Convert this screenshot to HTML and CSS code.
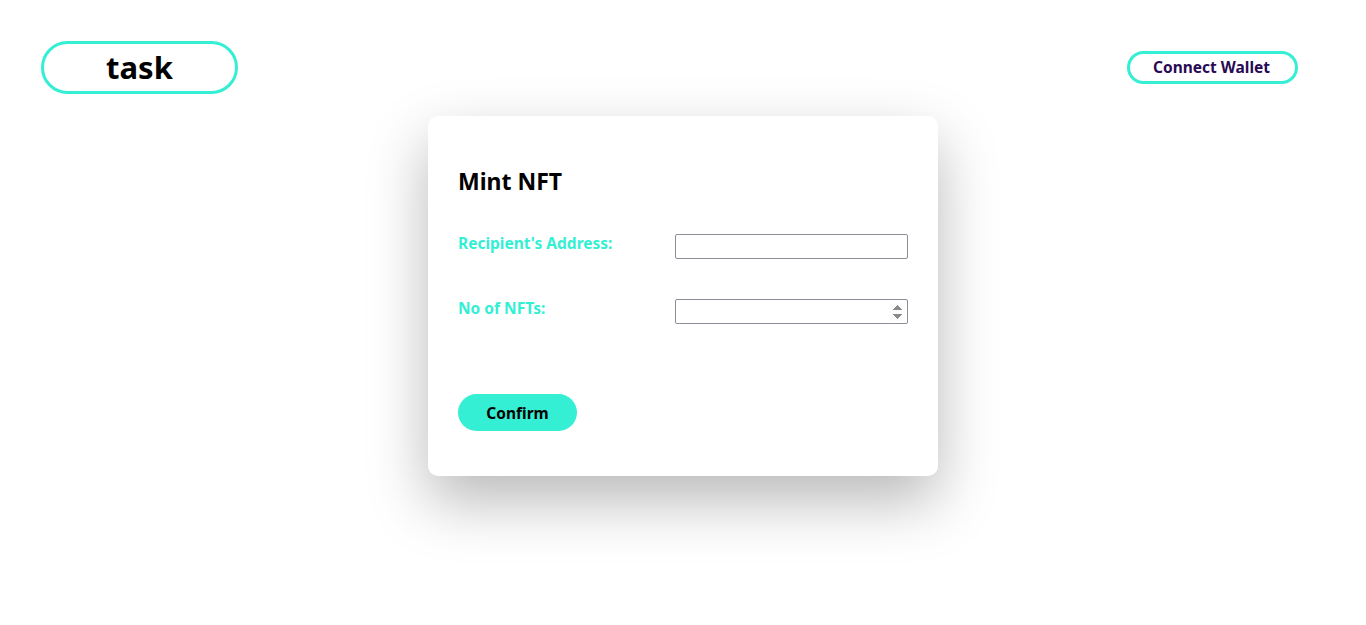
FILE: index.html
```html
<!DOCTYPE html>
<html>
<head>
<meta charset="utf-8">
<link rel="stylesheet" href="styles.css">
</head>
<body>
<header class="header">
  <div class="logo">task</div>
  <button class="wallet">Connect Wallet</button>
</header>
<main class="main">
  <section class="card">
    <h2 class="title">Mint NFT</h2>
    <div class="form">
      <label class="label" for="addr">Recipient's Address:</label>
      <input class="input" id="addr" type="text">
      <label class="label" for="num">No of NFTs:</label>
      <input class="input" id="num" type="number">
    </div>
    <button class="confirm">Confirm</button>
  </section>
</main>
</body>
</html>
```

FILE: styles.css
```css
html, body {
  margin: 0;
  padding: 0;
  background: #ffffff;
  font-family: "Noto Sans", "Open Sans", sans-serif;
}
body {
  min-height: 100vh;
}
.header {
  display: flex;
  justify-content: space-between;
  align-items: center;
  padding: 41px 68px 0 41px;
}
.logo {
  box-sizing: border-box;
  width: 197px;
  height: 53px;
  border: 3px solid #34efd4;
  border-radius: 27px;
  display: flex;
  align-items: center;
  justify-content: center;
  font-size: 31px;
  font-weight: 700;
  color: #000;
  padding-bottom: 2px;
}
.wallet {
  box-sizing: border-box;
  width: 171px;
  height: 33px;
  border: 3px solid #34efd4;
  border-radius: 17px;
  background: #fff;
  color: #290a55;
  font-family: inherit;
  font-size: 15.5px;
  font-weight: 700;
  padding: 0 2px 1px 0;
}
.main {
  display: flex;
  justify-content: center;
  padding-top: 22px;
  padding-bottom: 100px;
}
.card {
  box-sizing: border-box;
  width: 510px;
  height: 360px;
  background: #fff;
  border-radius: 10px;
  box-shadow: 0 25px 60px rgba(0, 0, 0, 0.28);
  padding: 50px 30px 0 30px;
}
.title {
  margin: 0;
  font-size: 23px;
  font-weight: 700;
  line-height: 30px;
  color: #000;
}
.form {
  display: grid;
  grid-template-columns: 217px 233px;
  row-gap: 40px;
  margin-top: 38px;
  align-items: start;
}
.label {
  font-size: 15.5px;
  font-weight: 700;
  color: #34efd4;
  line-height: 20px;
  margin-top: -1px;
}
.input {
  box-sizing: border-box;
  width: 233px;
  height: 25px;
  border: 1px solid #8f8c96;
  border-radius: 2px;
  margin: 0;
  font-family: inherit;
  font-size: 13px;
  padding: 1px 2px;
}
.input::-webkit-inner-spin-button,
.input::-webkit-outer-spin-button {
  opacity: 1;
}
.confirm {
  margin-top: 70px;
  width: 119px;
  height: 37px;
  border: none;
  border-radius: 19px;
  background: #34efd4;
  color: #000;
  font-family: inherit;
  font-size: 15.5px;
  font-weight: 700;
  padding: 0;
}
```
